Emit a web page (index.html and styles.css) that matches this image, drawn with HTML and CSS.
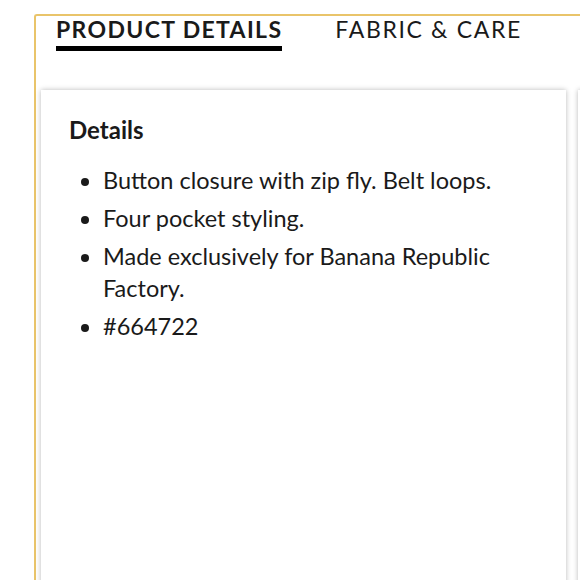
FILE: index.html
```html
<!DOCTYPE html>
<html>
<head>
<meta charset="utf-8">
<link rel="stylesheet" href="styles.css">
</head>
<body>
<div class="frame">
  <div class="tabs">
    <div class="tab active">PRODUCT DETAILS</div>
    <div class="tab">FABRIC &amp; CARE</div>
  </div>
  <div class="cards">
    <div class="card">
      <h2 class="title">Details</h2>
      <ul class="list">
        <li>Button closure with zip fly. Belt loops.</li>
        <li>Four pocket styling.</li>
        <li>Made exclusively for Banana Republic Factory.</li>
        <li>#664722</li>
      </ul>
    </div>
    <div class="card next"></div>
  </div>
</div>
</body>
</html>
```
FILE: styles.css
```css
html, body {
  margin: 0;
  padding: 0;
  background: #fff;
  overflow: hidden;
  width: 580px;
  height: 580px;
}
body {
  font-family: "Lato", "Liberation Sans", sans-serif;
  color: #1a1a1a;
}
.frame {
  margin-top: 14px;
  margin-left: 34px;
  width: 700px;
  height: 700px;
  border-top: 2px solid #e9c46a;
  border-left: 2px solid #e9c46a;
  border-top-left-radius: 3px;
}
.tabs {
  display: flex;
  gap: 53px;
  padding-left: 20px;
  height: 74px;
}
.tab {
  font-size: 23px;
  letter-spacing: 1.65px;
  height: 30px;
  line-height: 26px;
  white-space: nowrap;
}
.tab.active {
  font-weight: 700;
  letter-spacing: 1.35px;
  border-bottom: 5px solid #000;
  align-self: flex-start;
}
.cards {
  display: flex;
  gap: 12px;
  padding-left: 5px;
}
.card {
  flex: 0 0 525px;
  height: 600px;
  background: #fff;
  box-shadow: 0 0 5px rgba(0,0,0,0.28);
  box-sizing: border-box;
  padding: 27px 0 0 28px;
}
.card.next {
  flex-basis: 200px;
}
.title {
  margin: 0 0 21px;
  font-size: 24px;
  font-weight: 700;
  line-height: 26px;
}
.list {
  margin: 0;
  padding-left: 34px;
  font-size: 23.5px;
  line-height: 32px;
  padding-right: 40px;
}
.list li {
  margin-bottom: 6px;
}
```
